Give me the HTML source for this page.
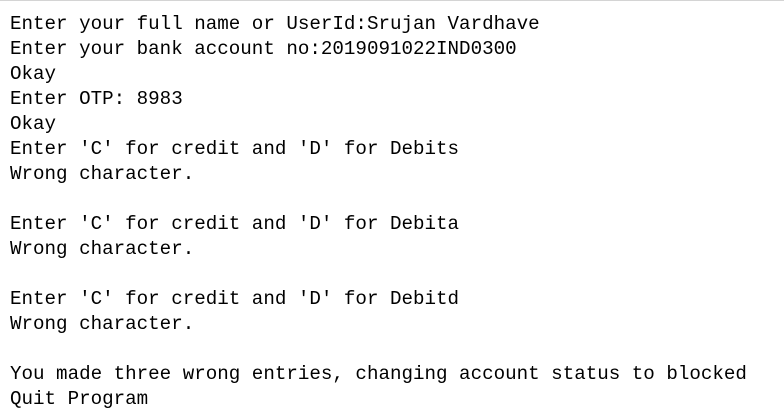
<!DOCTYPE html>
<html><head><meta charset="utf-8"><style>
html,body{margin:0;padding:0;background:#fff;width:784px;height:413px;overflow:hidden}
.top{position:absolute;left:0;top:0;width:784px;height:1px;background:#d4d4d4}
pre{position:absolute;left:10px;top:12px;margin:0;font-family:"Liberation Mono",monospace;font-size:19.2px;line-height:25px;color:#000;white-space:pre}
</style></head><body><div class="top"></div><pre>Enter your full name or UserId:Srujan Vardhave
Enter your bank account no:2019091022IND0300
Okay
Enter OTP: 8983
Okay
Enter 'C' for credit and 'D' for Debits
Wrong character.

Enter 'C' for credit and 'D' for Debita
Wrong character.

Enter 'C' for credit and 'D' for Debitd
Wrong character.

You made three wrong entries, changing account status to blocked
Quit Program</pre></body></html>
